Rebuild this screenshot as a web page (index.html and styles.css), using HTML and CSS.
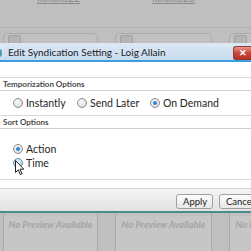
FILE: index.html
```html
<!DOCTYPE html>
<html lang="en">
<head>
    <meta charset="UTF-8">
    <meta name="viewport" content="width=device-width, initial-scale=1.0">
    <title>Edit Syndication Setting</title>
    <link rel="stylesheet" href="styles.css">
</head>
<body>
    <div class="backdrop">
        <div class="strip">
            <span class="lib">libdata22</span>
            <span class="lib">libdata23</span>
        </div>
        <div class="cards">
            <div class="card">
                <div class="thumb"></div>
                <div class="preview">No Preview Available</div>
            </div>
            <div class="card">
                <div class="thumb"></div>
                <div class="preview">No Preview Available</div>
            </div>
            <div class="card">
                <div class="thumb"></div>
                <div class="preview">No Preview Available</div>
            </div>
        </div>
    </div>

    <div class="dialog">
        <div class="titlebar">
            <span class="frame-edge"></span>
            <span class="title">Edit Syndication Setting - Loig Allain</span>
            <span class="close">&#x2715;</span>
        </div>
        <div class="body">
            <div class="group-head">Temporization Options</div>
            <div class="radio-row">
                <label class="radio"><span class="dot"></span>Instantly</label>
                <label class="radio"><span class="dot"></span>Send Later</label>
                <label class="radio"><span class="dot on"></span>On Demand</label>
            </div>
            <div class="group-head">Sort Options</div>
            <div class="radio-col">
                <label class="radio"><span class="dot on"></span>Action</label>
                <label class="radio"><span class="dot hover"></span>Time</label>
            </div>
        </div>
        <div class="footer">
            <button class="btn">Apply</button>
            <button class="btn">Cancel</button>
        </div>
    </div>

    <svg class="cursor" width="10" height="16" viewBox="0 0 10 16">
        <path d="M0.5 0.5 L0.5 12.5 L3.3 9.8 L5.3 14.5 L7 13.8 L5 9.2 L8.8 9.2 Z" fill="#fff" stroke="#222" stroke-width="1"/>
    </svg>
</body>
</html>
```

FILE: styles.css
```css
body {
    margin: 0;
    width: 251px;
    height: 251px;
    overflow: hidden;
    position: relative;
    background: #bfbfbf;
    font-family: Lato, "Open Sans", sans-serif;
}
.backdrop {
    height: 251px;
    overflow: hidden;
}
.strip {
    height: 27px;
    border-bottom: 1px solid #b1b1b1;
    display: flex;
    padding-left: 37px;
    gap: 89px;
}
.lib {
    width: 26px;
    font-size: 10.5px;
    color: #8a8a8a;
    margin-top: -8px;
    text-decoration: underline;
}
.cards {
    display: grid;
    grid-template-columns: 95px 97px 97px;
    gap: 17px;
    padding: 5px 0 0 3px;
}
.card {
    height: 230px;
    border: 1px solid #a9a9a9;
    border-radius: 5px 5px 0 0;
    background: #c1c1c1;
    display: flex;
    flex-direction: column;
    overflow: hidden;
}
.thumb {
    width: 11px;
    height: 8px;
    margin: 1px 0 0 4px;
    border: 1px solid #a2a2a2;
    border-radius: 2px;
    background: #b4b4b4;
}
.preview {
    margin-top: 171px;
    flex: 1;
    background: #c6c6c6;
    font-size: 9.5px;
    font-style: italic;
    font-weight: bold;
    color: #a4a4a4;
    text-align: center;
    white-space: nowrap;
    padding-top: 3px;
}

.dialog {
    position: absolute;
    left: 0;
    top: 43px;
    width: 251px;
    background: #fff;
    border-bottom: 2px solid #4d8a8c;
}
.titlebar {
    height: 17px;
    display: flex;
    align-items: center;
    background: linear-gradient(#dde9f5, #c7dbef);
    border-bottom: 2px solid #3a9de0;
    position: relative;
}
.frame-edge {
    position: absolute;
    left: -2px;
    top: 6px;
    width: 4px;
    height: 8px;
    border-radius: 0 3px 3px 0;
    background: #4e9fb4;
}
.title {
    font-size: 10px;
    color: #1c1c1c;
    padding-left: 8px;
    flex: 1;
}
.close {
    width: 17px;
    height: 12px;
    margin-top: 3px;
    border: 1px solid #8c3a34;
    border-right: none;
    border-radius: 3px 0 0 3px;
    background: linear-gradient(#e59a8c, #c8483a 50%, #b83024);
    color: #fff;
    font-size: 9px;
    font-weight: bold;
    text-align: center;
    line-height: 12px;
}
.body {
    padding-top: 15px;
}
.group-head {
    height: 12px;
    line-height: 12px;
    border-top: 1px solid #d8d8d8;
    border-bottom: 1px solid #cfcfcf;
    padding-left: 3px;
    font-size: 8px;
    font-weight: bold;
    color: #4a4a4a;
}
.radio-row {
    height: 24px;
    display: grid;
    grid-template-columns: 64px 73px auto;
    align-items: center;
    padding-left: 13px;
}
.radio-col {
    height: 51px;
    display: flex;
    flex-direction: column;
    padding: 13px 0 0 13px;
    box-sizing: border-box;
    border-bottom: 1px solid #dcdcdc;
}
.radio {
    display: flex;
    align-items: center;
    gap: 3px;
    font-size: 10.5px;
    color: #262626;
    height: 14px;
}
.dot {
    width: 8px;
    height: 8px;
    border-radius: 50%;
    border: 1px solid #8d8d8d;
    background: radial-gradient(circle at 40% 35%, #fafafa, #d4d4d4);
    position: relative;
}
.dot.on::after {
    content: "";
    position: absolute;
    left: 2px;
    top: 2px;
    width: 4px;
    height: 4px;
    border-radius: 50%;
    background: #2e86d8;
}
.dot.hover {
    border-color: #6a8fae;
    background: radial-gradient(circle at 40% 35%, #e6f2fb, #a9c6de);
}
.footer {
    margin-top: 8px;
    height: 23px;
    border-top: 1px solid #d4d4d4;
    background: linear-gradient(#f5f5f5, #e2e2e2);
    display: flex;
    align-items: flex-end;
    padding: 0 0 2px 176px;
    box-sizing: border-box;
    gap: 6px;
}
.btn {
    min-width: 37px;
    height: 15px;
    padding: 0 6px;
    border: 1px solid #a0a0a0;
    border-radius: 3px;
    background: linear-gradient(#fdfdfd, #e8e8e8);
    font-family: inherit;
    font-size: 9.5px;
    color: #222;
    line-height: 13px;
}
.cursor {
    position: absolute;
    left: 15px;
    top: 160px;
}
```
